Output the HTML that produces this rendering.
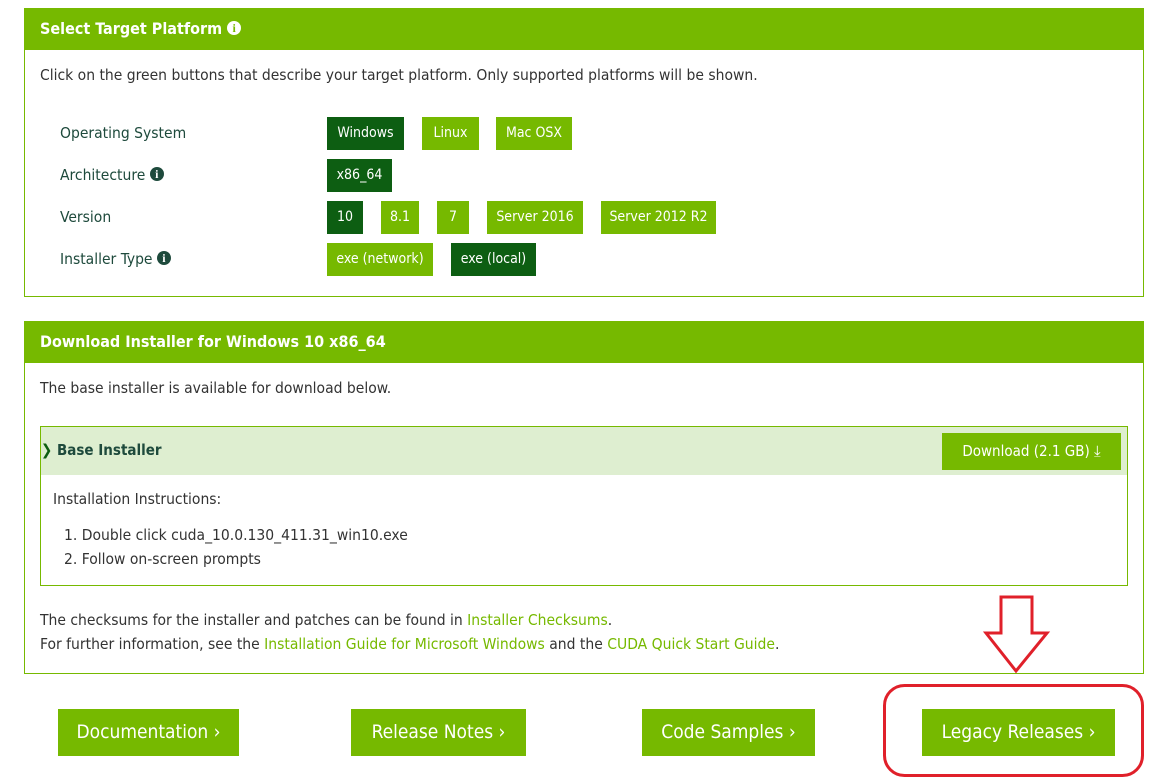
<!DOCTYPE html>
<html><head><meta charset="utf-8"><style>
body{margin:0;width:1155px;height:778px;background:#fff;font-family:"DejaVu Sans Condensed","Liberation Sans",sans-serif;color:#333;position:relative;overflow:hidden}
.a{position:absolute}
.panel{position:absolute;left:24px;width:1118px;border:1px solid #76b900}
.hd{background:#76b900;color:#fff;font-weight:bold;font-size:16px;height:41px;line-height:40px;padding-left:15px}
.t{position:absolute;font-size:15.5px;white-space:nowrap}
.lb{position:absolute;left:60px;font-size:15.5px;color:#1e4a3c}
.b{position:absolute;height:33px;line-height:33px;text-align:center;color:#fff;font-size:14px;background:#76b900}
.d{background:#0d5e12}
.i{display:inline-block;width:14px;height:14px;border-radius:50%;background:currentColor;vertical-align:-1px;position:relative;line-height:14px}
.i:after{content:"i";position:absolute;left:0;right:0;top:0;line-height:14px;text-align:center;font-size:12px;font-weight:bold;font-family:"Liberation Serif",serif}
.hd .i:after{color:#76b900}.lb .i:after{color:#fff}
.lk{color:#76b900}
.bb{position:absolute;top:709px;height:47px;line-height:46px;background:#76b900;color:#fff;font-size:19px;text-align:center}
</style></head><body>
<div class="panel" style="top:8px;height:287px">
<div class="hd">Select Target Platform <span class="i" style="color:#fff"></span></div>
</div>
<div class="t" style="left:40px;top:66px">Click on the green buttons that describe your target platform. Only supported platforms will be shown.</div>
<div class="lb" style="top:124px">Operating System</div>
<div class="lb" style="top:166px">Architecture <span class="i"></span></div>
<div class="lb" style="top:208px">Version</div>
<div class="lb" style="top:250px">Installer Type <span class="i"></span></div>
<div class="b d" style="left:327px;top:117px;width:77px">Windows</div>
<div class="b" style="left:422px;top:117px;width:57px">Linux</div>
<div class="b" style="left:496px;top:117px;width:76px">Mac OSX</div>
<div class="b d" style="left:327px;top:159px;width:65px">x86_64</div>
<div class="b d" style="left:327px;top:201px;width:36px">10</div>
<div class="b" style="left:381px;top:201px;width:38px">8.1</div>
<div class="b" style="left:437px;top:201px;width:32px">7</div>
<div class="b" style="left:487px;top:201px;width:96px">Server 2016</div>
<div class="b" style="left:601px;top:201px;width:115px">Server 2012 R2</div>
<div class="b" style="left:327px;top:243px;width:106px">exe (network)</div>
<div class="b d" style="left:451px;top:243px;width:85px">exe (local)</div>

<div class="panel" style="top:321px;height:351px">
<div class="hd">Download Installer for Windows 10 x86_64</div>
</div>
<div class="t" style="left:40px;top:379px">The base installer is available for download below.</div>
<div class="a" style="left:40px;top:426px;width:1086px;height:158px;border:1px solid #76b900"></div>
<div class="a" style="left:41px;top:427px;width:1086px;height:48px;background:#deeed0"></div>
<div class="t" style="left:41px;top:441px;font-weight:bold;color:#1e4a3c;font-size:15px"><span style="color:#0d5e12">&#10095;</span> Base Installer</div>
<div class="b" style="left:942px;top:433px;width:179px;height:37px;line-height:37px;font-size:15px">Download (2.1 GB) &#10515;</div>
<div class="t" style="left:53px;top:490px">Installation Instructions:</div>
<div class="t" style="left:64px;top:526px">1. Double click cuda_10.0.130_411.31_win10.exe</div>
<div class="t" style="left:64px;top:550px">2. Follow on-screen prompts</div>
<div class="t" style="left:40px;top:611px">The checksums for the installer and patches can be found in <span class="lk">Installer Checksums</span>.</div>
<div class="t" style="left:40px;top:635px">For further information, see the <span class="lk">Installation Guide for Microsoft Windows</span> and the <span class="lk">CUDA Quick Start Guide</span>.</div>

<div class="bb" style="left:58px;width:181px">Documentation &#8250;</div>
<div class="bb" style="left:351px;width:175px">Release Notes &#8250;</div>
<div class="bb" style="left:642px;width:173px">Code Samples &#8250;</div>
<div class="bb" style="left:922px;width:193px">Legacy Releases &#8250;</div>

<svg class="a" style="left:0;top:0" width="1155" height="778">
<rect x="884.5" y="685.5" width="258" height="90" rx="20" fill="none" stroke="#e0202a" stroke-width="3"/>
<path d="M1001 597H1032V633H1047L1016 671L986 633H1001Z" fill="none" stroke="#e0202a" stroke-width="3" stroke-linejoin="miter"/>
</svg>
</body></html>
